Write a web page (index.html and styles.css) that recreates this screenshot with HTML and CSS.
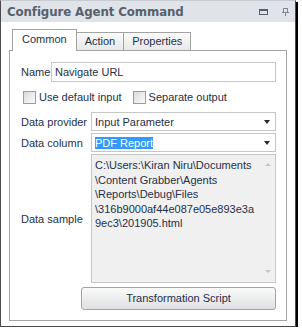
FILE: index.html
```html
<!DOCTYPE html>
<html lang="en">
<head>
  <meta charset="UTF-8">
  <title>Configure Agent Command</title>
  <link rel="stylesheet" href="styles.css">
</head>
<body>

<div class="window">
  <div class="titlebar">
    <span class="title">Configure Agent Command</span>
    <span class="tb-icons">
      <svg class="ico" width="9" height="6" viewBox="0 0 9 6">
        <rect x="0.5" y="0.5" width="8" height="5" fill="none" stroke="#55606c"/>
        <rect x="0" y="0" width="9" height="2" fill="#55606c"/>
      </svg>
      <svg class="ico pin" width="7" height="8" viewBox="0 0 7 8">
        <rect x="1.5" y="0.5" width="4" height="4" fill="none" stroke="#7d8894"/>
        <rect x="0" y="4" width="7" height="1" fill="#7d8894"/>
        <rect x="3" y="5" width="1" height="3" fill="#7d8894"/>
      </svg>
    </span>
  </div>

  <div class="content">
    <div class="tabs">
      <div class="tab active">Common</div>
      <div class="tab">Action</div>
      <div class="tab">Properties</div>
    </div>

    <div class="panel">

      <div class="row name-row">
        <span class="lbl">Name</span>
        <div class="field">Navigate URL</div>
      </div>

      <div class="checks">
        <span class="chk"></span><span class="chk-lbl">Use default input</span>
        <span class="chk second"></span><span class="chk-lbl">Separate output</span>
      </div>

      <div class="row combo-row">
        <span class="lbl wide">Data provider</span>
        <div class="field combo"><span>Input Parameter</span><span class="arrow"></span></div>
      </div>

      <div class="row combo-row col">
        <span class="lbl wide">Data column</span>
        <div class="field combo"><span class="sel">PDF Report</span><span class="arrow"></span></div>
      </div>

      <div class="row sample-row">
        <span class="lbl wide">Data sample</span>
        <div class="memo">
          <div class="memo-text">C:\Users:\Kiran Niru\Documents<br>\Content Grabber\Agents<br>\Reports\Debug\Files<br>\316b9000af44e087e05e893e3a<br>9ec3\201905.html</div>
          <div class="scroll">
            <span class="up"></span>
            <span class="down"></span>
          </div>
        </div>
      </div>

      <div class="btn-row">
        <div class="btn">Transformation Script</div>
      </div>

    </div>
  </div>
</div>

</body>
</html>
```

FILE: styles.css
```css
*{
  box-sizing: border-box;
}

body{
  margin: 0;
  background: #fff;
  font-family: 'Liberation Sans', Arial, sans-serif;
  font-size: 11px;
  color: #1f3048;
}

.window{
  width: 296px;
  height: 327px;
  border: 1px solid #4a4a4a;
  border-top-color: #c6cbd1;
  box-shadow: 2px 2px 0 #000;
  background: #fff;
}

.titlebar{
  height: 21px;
  background: #e0e3e7;
  display: flex;
  align-items: center;
  justify-content: space-between;
  padding: 0 6px 0 6px;
}

.title{
  font-family: 'DejaVu Sans', sans-serif;
  font-weight: bold;
  font-size: 11.8px;
  color: #56616d;
  letter-spacing: -0.1px;
}

.tb-icons{
  display: flex;
  align-items: center;
  gap: 14px;
}

.ico{
  display: block;
}

.pin{
  margin-top: 1px;
}

.content{
  padding: 7px 8px 5px 8px;
}

/* tabs */

.tabs{
  display: flex;
  align-items: flex-end;
  padding-left: 3px;
  height: 21px;
}

.tab{
  height: 18px;
  padding: 0 8px;
  line-height: 17px;
  border: 1px solid #a3a3a3;
  border-bottom: none;
  background: linear-gradient(#fafafa, #e8e8e8);
  margin-left: -1px;
}

.tab.active{
  position: relative;
  z-index: 1;
  height: 22px;
  margin-bottom: -1px;
  margin-left: 0;
  line-height: 19px;
  background: #fff;
  padding: 0 9px;
}

.panel{
  height: 271px;
  border: 1px solid #a3a3a3;
  padding: 11px 10px 0 11px;
}

/* rows */

.row{
  display: flex;
  align-items: center;
}

.lbl{
  width: 30px;
  flex: none;
}

.lbl.wide{
  width: 70px;
}

.field{
  flex: 1;
  height: 20px;
  border: 1px solid #c6c6c6;
  background: #fff;
  padding: 0 3px;
  line-height: 18px;
}

.checks{
  display: flex;
  align-items: center;
  height: 18px;
  margin-top: 6px;
  padding-left: 2px;
}

.chk{
  width: 13px;
  height: 13px;
  border: 1px solid #9c9c9c;
  background: linear-gradient(135deg, #dadada, #fbfbfb);
  flex: none;
}

.chk-lbl{
  margin-left: 3px;
}

.chk.second{
  margin-left: 11px;
}

.combo-row{
  margin-top: 6px;
}

.combo-row.col{
  margin-top: 2px;
}

.combo{
  height: 19px;
  display: flex;
  align-items: center;
  justify-content: space-between;
  padding-right: 5px;
}

.sel{
  background: #3399ff;
  color: #fff;
  line-height: 12px;
}

.arrow{
  width: 0;
  height: 0;
  border-left: 3.5px solid transparent;
  border-right: 3.5px solid transparent;
  border-top: 4px solid #2a2a2a;
}

.sample-row{
  margin-top: 2px;
}

.memo{
  flex: 1;
  height: 129px;
  border: 1px solid #c6c6c6;
  background: #f0f0f0;
  display: flex;
}

.memo-text{
  flex: 1;
  padding: 3px 3px;
  line-height: 14.5px;
}

.scroll{
  width: 15px;
  display: flex;
  flex-direction: column;
  justify-content: space-between;
  align-items: center;
  padding: 8px 0 9px;
}

.up{
  width: 0;
  height: 0;
  border-left: 3px solid transparent;
  border-right: 3px solid transparent;
  border-bottom: 3px solid #c4c4c4;
}

.down{
  width: 0;
  height: 0;
  border-left: 3px solid transparent;
  border-right: 3px solid transparent;
  border-top: 3px solid #c4c4c4;
}

.btn-row{
  display: flex;
  justify-content: flex-end;
  margin-top: 4px;
}

.btn{
  width: 195px;
  height: 23px;
  border: 1px solid #a4a4a4;
  border-radius: 3px;
  background: linear-gradient(#fafafa, #dfe0e3);
  text-align: center;
  line-height: 21px;
}
```
